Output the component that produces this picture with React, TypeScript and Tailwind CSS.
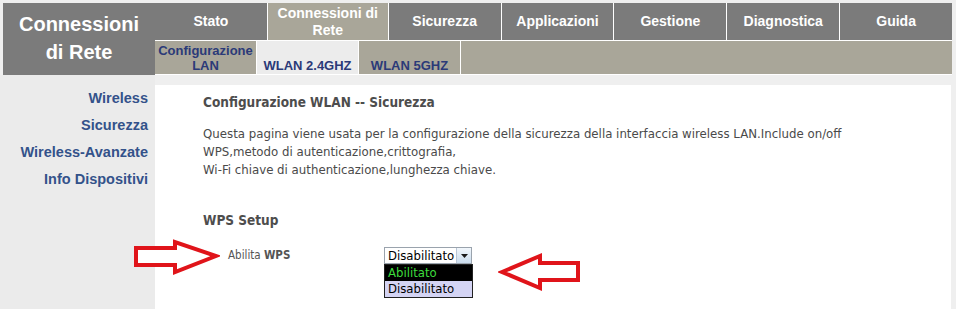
import React from "react";

const navTabs = [
  { label: "Stato", active: false },
  { label: "Connessioni di Rete", active: true },
  { label: "Sicurezza", active: false },
  { label: "Applicazioni", active: false },
  { label: "Gestione", active: false },
  { label: "Diagnostica", active: false },
  { label: "Guida", active: false },
];

const sideLinks = ["Wireless", "Sicurezza", "Wireless-Avanzate", "Info Dispositivi"];

const tahoma = { fontFamily: '"DejaVu Sans Condensed", "DejaVu Sans", "Noto Sans", sans-serif' };

function ArrowRight() {
  return (
    <svg width="90" height="40" viewBox="0 0 90 40" className="absolute left-[130px] top-[238px]">
      <path
        d="M6 10 L45 10 L45 4 L86 18 L45 34 L45 27 L6 27 Z"
        fill="white"
        stroke="#e0141a"
        strokeWidth="4"
        strokeLinejoin="miter"
      />
    </svg>
  );
}

function ArrowLeft() {
  return (
    <svg width="86" height="40" viewBox="0 0 86 40" className="absolute left-[498px] top-[253px]">
      <path
        d="M4 19 L42 3 L42 10 L80 10 L80 27 L42 27 L42 35 Z"
        fill="white"
        stroke="#e0141a"
        strokeWidth="4"
        strokeLinejoin="miter"
      />
    </svg>
  );
}

export default function App() {
  return (
    <div
      className="relative w-[956px] h-[309px] overflow-hidden bg-[#efefef]"
      style={{ fontFamily: '"Liberation Sans", Arial, sans-serif' }}
    >
      {/* Header */}
      <div className="flex pt-[3px] pl-[3px]">
        <div className="w-[152px] h-[72px] bg-[#7b7b7b] flex flex-col items-center justify-center pb-[3px] text-white font-bold text-[20px] leading-[28px]">
          <span>Connessioni</span>
          <span>di Rete</span>
        </div>
        <div className="w-[797px] flex flex-col gap-px bg-white">
          <div className="h-[37px] flex gap-px">
            {navTabs.map((t) => (
              <div
                key={t.label}
                className={`flex-1 flex items-center justify-center text-center text-white font-bold text-[14px] leading-[17px] ${
                  t.active ? "bg-[#a9a699] px-1" : "bg-[#7b7b7b]"
                }`}
              >
                {t.label}
              </div>
            ))}
          </div>
          <div className="h-[33px] flex gap-px text-[13px] font-bold text-[#2b3a78]">
            <div className="w-[101px] bg-[#a9a699] flex flex-col items-center justify-center leading-[15px] pt-[1px]">
              <span>Configurazione</span>
              <span>LAN</span>
            </div>
            <div className="w-[101px] bg-[#ececec] flex items-end justify-center pb-[1px] leading-[15px]">
              WLAN 2.4GHZ
            </div>
            <div className="w-[101px] bg-[#a9a699] flex items-end justify-center pb-[1px] leading-[15px]">
              WLAN 5GHZ
            </div>
            <div className="flex-1 bg-[#a9a699]" />
          </div>
        </div>
      </div>

      {/* Body */}
      <div className="flex h-[234px]">
        <div className="w-[155px] bg-[#ebebeb] flex flex-col items-end pr-[7px] pt-[15px] gap-[10px] text-[14.5px] leading-[17px] font-bold text-[#33528a]">
          {sideLinks.map((l) => (
            <span key={l}>{l}</span>
          ))}
        </div>
        <div className="mt-[10px] w-[796px] bg-white pl-[48px] pt-[9px] text-[#555555]" style={tahoma}>
          <div className="text-[13.5px] leading-[16px] font-bold text-[#4d4d4d]">Configurazione WLAN -- Sicurezza</div>
          <div className="mt-[15px] text-[13.1px] leading-[18px] text-[#4a4a4a]">
            <div>Questa pagina viene usata per la configurazione della sicurezza della interfaccia wireless LAN.Include on/off</div>
            <div>WPS,metodo di autenticazione,crittografia,</div>
            <div>Wi-Fi chiave di authenticazione,lunghezza chiave.</div>
          </div>
          <div className="mt-[32px] text-[13.5px] leading-[18px] font-bold text-[#4d4d4d]">WPS Setup</div>
          <div className="mt-[18px] flex items-center h-[17px]">
            <div className="w-[181px] pl-[25px] text-[11.5px] text-[#555555]">
              Abilita <span className="font-bold">WPS</span>
            </div>
            <div className="relative">
              <div className="w-[88px] h-[17px] border border-[#9aa3ad] bg-white flex items-center text-[13px] text-black">
                <span className="flex-1 pl-[3px] leading-[15px]">Disabilitato</span>
                <span className="w-[15px] h-full border-l border-[#b9c6d6] bg-gradient-to-b from-[#f2f7fc] to-[#cadced] flex items-center justify-center">
                  <svg width="7" height="4" viewBox="0 0 7 4">
                    <path d="M0 0 L7 0 L3.5 4 Z" fill="#1a1a1a" />
                  </svg>
                </span>
              </div>
              <div className="absolute left-0 top-[17px] w-[89px] border border-[#222] text-[13px] leading-[16px]">
                <div className="bg-black text-[#3ddc3d] pl-[3px]">Abilitato</div>
                <div className="bg-[#d4d4f4] text-black pl-[3px]">Disabilitato</div>
              </div>
            </div>
          </div>
        </div>
      </div>

      <ArrowRight />
      <ArrowLeft />
    </div>
  );
}
